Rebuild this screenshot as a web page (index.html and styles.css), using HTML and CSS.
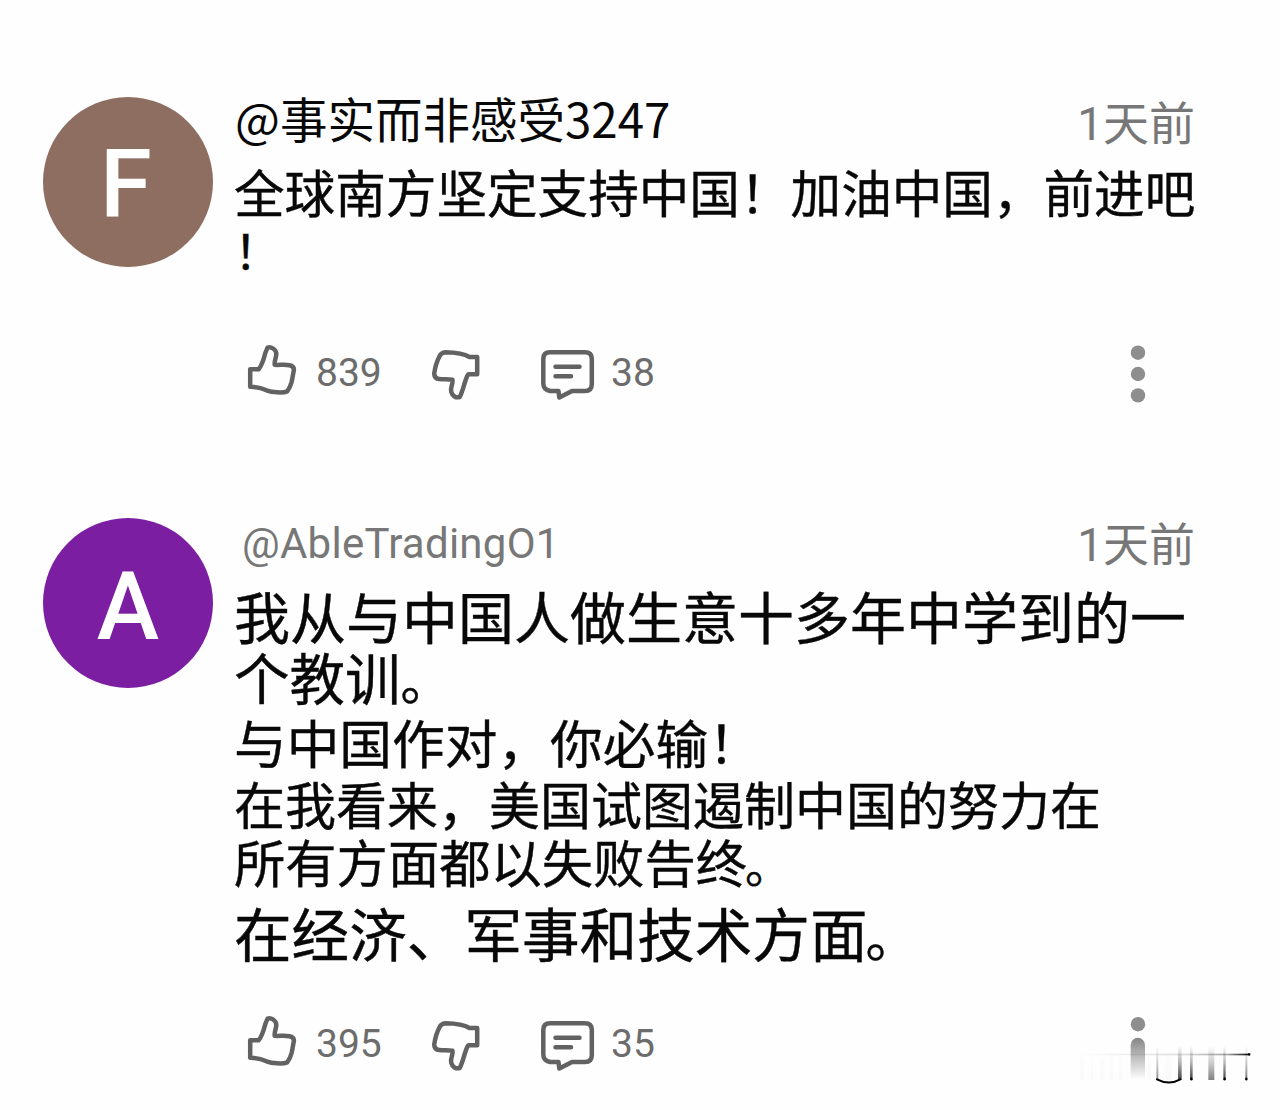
FILE: index.html
```html
<!DOCTYPE html>
<html lang="zh-CN">
<head>
<meta charset="utf-8">
<title>评论</title>
<link rel="stylesheet" href="styles.css">
</head>
<body>
<svg class="symbols" aria-hidden="true">
  <symbol id="like" viewBox="0 0 60 60">
    <path d="M8.2 26.3H16.5C18.8 24 21.8 16 23.3 10L25.6 4.5C29 3.2 34 6.500 34.300 10.500C34.500 14.500 32 18 32.700 21.800C37 22.300 42.500 21.200 47.500 22.200Q52.500 23.200 51.800 27.500C51 31 50.300 36 49.600 39Q48 45 45.200 48.400C40.500 50.400 30 49.300 24.500 47.300C19 44.500 14.500 43.700 8.200 43.800Z"/>
  </symbol>
  <symbol id="dislike" viewBox="0 0 60 60">
    <path d="M51.200 14H43.500C38 10.500 29 9.300 19.500 9.200Q15 9.500 13.400 13.500C10.500 19 9 25 8.200 30.500Q8.500 35.700 13 36C18 36.600 22 36 26.500 36.800C27.500 41 23.800 44 25.300 49C26.300 53 30 55.200 33.700 54C36.300 49 37.500 44 39 39C40.300 35.500 40.700 33 42.500 31.200H51.200Z"/>
  </symbol>
  <symbol id="reply" viewBox="0 0 60 60">
    <path d="M13 9.300H48Q54.800 9.300 54.800 16V41.300Q54.800 48 48 48H35L22.300 54.500L21.500 48H13Q6.300 46.500 6.300 40.500V16Q6.300 9.300 13 9.300Z"/>
    <path d="M18.500 23.700H42.500M18.500 33.300H34" stroke-linecap="round"/>
  </symbol>
</svg>
<main class="comments">
  <article class="comment">
    <div class="avatar avatar-brown"><span>F</span></div>
    <div class="body">
      <header class="head"><span class="name">@事实而非感受3247</span><time class="time">1天前</time></header>
      <div class="text text-first">
        <p class="l1">全球南方坚定支持中国！加油中国，前进吧</p>
        <p class="l2">！</p>
      </div>
      <footer class="actions">
        <svg class="icon"><use href="#like"/></svg><span class="count likes">839</span>
        <svg class="icon"><use href="#dislike"/></svg>
        <svg class="icon icon-reply"><use href="#reply"/></svg><span class="count">38</span>
        <svg class="menu" viewBox="0 0 16 60"><circle cx="8" cy="9.700" r="7.200"/><circle cx="8" cy="31" r="7.200"/><circle cx="8" cy="52.400" r="7.200"/></svg>
      </footer>
    </div>
  </article>
  <article class="comment">
    <div class="avatar avatar-purple"><span>A</span></div>
    <div class="body">
      <header class="head"><span class="name name-latin">@AbleTradingO1</span><time class="time">1天前</time></header>
      <div class="text text-second">
        <p class="s1">我从与中国人做生意十多年中学到的一</p>
        <p class="s2">个教训<span class="stop">。</span></p>
        <p class="s3">与中国作对，你必输！</p>
        <p class="s4">在我看来，美国试图遏制中国的努力在</p>
        <p class="s5">所有方面都以失败告终<span class="stop">。</span></p>
        <p class="s6">在经济、军事和技术方面<span class="stop">。</span></p>
      </div>
      <footer class="actions">
        <svg class="icon"><use href="#like"/></svg><span class="count likes">395</span>
        <svg class="icon"><use href="#dislike"/></svg>
        <svg class="icon icon-reply"><use href="#reply"/></svg><span class="count">35</span>
        <svg class="menu" viewBox="0 0 16 60"><circle cx="8" cy="10.200" r="7.200"/></svg>
      </footer>
    </div>
  </article>
</main>
<svg class="watermark" viewBox="0 0 720 330" aria-hidden="true">
  <defs>
    <linearGradient id="dotFade" x1="0" y1="0" x2="0" y2="1"><stop offset="0" stop-color="#858585"/><stop offset=".3" stop-color="#aaa"/><stop offset="1" stop-color="#fff"/></linearGradient>
    <linearGradient id="stemFade" x1="0" y1="0" x2="0" y2="1"><stop offset="0" stop-color="#000" stop-opacity="0"/><stop offset=".5" stop-color="#000" stop-opacity=".3"/><stop offset="1" stop-color="#000" stop-opacity=".75"/></linearGradient>
    <linearGradient id="barFade" x1="0" y1="0" x2="1" y2="0"><stop offset="0" stop-color="#000" stop-opacity="0"/><stop offset=".6" stop-color="#000" stop-opacity=".13"/><stop offset=".87" stop-color="#000" stop-opacity=".35"/><stop offset="1" stop-color="#000"/></linearGradient>
    <linearGradient id="ghost" x1="0" y1="0" x2="0" y2="1"><stop offset="0" stop-color="#000" stop-opacity="0"/><stop offset="1" stop-color="#000" stop-opacity=".02"/></linearGradient>
  </defs>
  <path fill="url(#ghost)" d="M120 170h12v70h-12zM153 140h7v100h-7zM180 170h12v70h-12zM208 160h12v80h-12zM235 160h12v80h-12zM325 160h8v80h-8zM375 160h20v80h-20z"/>
  <path fill="url(#dotFade)" d="M272 135a21.500 21.500 0 0 1 43 0v105h-43z"/>
  <rect x="120" y="161" width="510" height="5" fill="url(#barFade)"/>
  <g fill="url(#stemFade)">
    <rect x="349" y="138" width="6" height="102" opacity=".6"/>
    <rect x="414" y="138" width="11" height="102"/>
    <rect x="450" y="138" width="8" height="102"/>
    <rect x="505" y="138" width="18" height="102" opacity=".65"/>
    <rect x="550" y="138" width="7" height="102"/>
    <rect x="616" y="138" width="6" height="102" opacity=".7"/>
  </g>
  <path d="M351 238Q387 257 421 238" fill="none" stroke="#000" stroke-width="6" stroke-linecap="round"/>
  <path d="M454 236v2M554 236v2M619 236v2M627 163h1" stroke="#000" stroke-width="7" stroke-linecap="round"/>
</svg>
</body>
</html>
```
FILE: styles.css
```css
* { box-sizing: border-box; }
body {
  margin: 0;
  min-height: 1110px;
  position: relative;
  background: #fefefe;
  color: #080808;
  font-family: "Noto Sans CJK SC", sans-serif;
}
.symbols { display: none; }
.comments {
  display: flex;
  flex-direction: column;
  gap: 115px;
  padding: 97px 87px 0 43px;
}
.comment { display: grid; grid-template-columns: 170px minmax(0, 1fr); gap: 21px; }
.avatar {
  width: 170px;
  height: 170px;
  border-radius: 50%;
  color: #fff;
  font: 500 94px/174px Roboto, sans-serif;
  text-align: center;
}
.avatar span { display: block; }
.avatar-brown { background: #8d6e61; }
.avatar-brown span { transform: translate(-2px, 1px); }
.avatar-purple { background: #7b1ea2; padding-top: 2px; }
.head { display: flex; justify-content: space-between; height: 53px; margin-right: -2px; }
.name { font-size: 47.5px; line-height: 42px; padding-left: 1px; }
.name-latin {
  font-family: Roboto, sans-serif;
  font-size: 42px;
  line-height: 51px;
  letter-spacing: .25px;
  color: #777;
  padding-left: 8px;
}
.time {
  font: 46px/54px Roboto, "Noto Sans CJK SC", sans-serif;
  color: #777;
}
.text p { margin: 0; white-space: nowrap; -webkit-text-stroke: .4px #080808; }
.text-first { padding-top: 13px; height: 193px; }
.l1 { font-size: 50.6px; line-height: 57px; }
.l2 { font-size: 47px; line-height: 57px; }
.text-second { padding-top: 13px; height: 443px; }
.s1 { font-size: 56px; line-height: 61px; }
.s2 { font-size: 55.500px; line-height: 63px; }
.s3 { font-size: 52.700px; line-height: 62px; }
.s4 { font-size: 51px; line-height: 63px; }
.s5 { font-size: 51.300px; line-height: 52px; }
.s6 { font-size: 57.600px; line-height: 86px; }
.stop { font-size: .9em; }
.s5 .stop, .s6 .stop { margin-left: -2px; }
.actions { display: flex; align-items: center; height: 60px; padding: 0 47px 0 8px; }
.icon {
  width: 60px;
  height: 60px;
  flex: none;
  fill: none;
  stroke: #626262;
  stroke-width: 4.500;
  stroke-linejoin: round;
}
.icon-reply { margin-left: 51px; }
.count { font: 39px/60px Roboto, sans-serif; color: #6c6c6c; padding-left: 14px; }
.likes { width: 124px; }
.menu { width: 16px; height: 60px; margin-left: auto; fill: #8e8e8e; }
.watermark {
  position: absolute;
  left: 1040px;
  top: 1000px;
  width: 240px;
  height: 110px;
}
```
